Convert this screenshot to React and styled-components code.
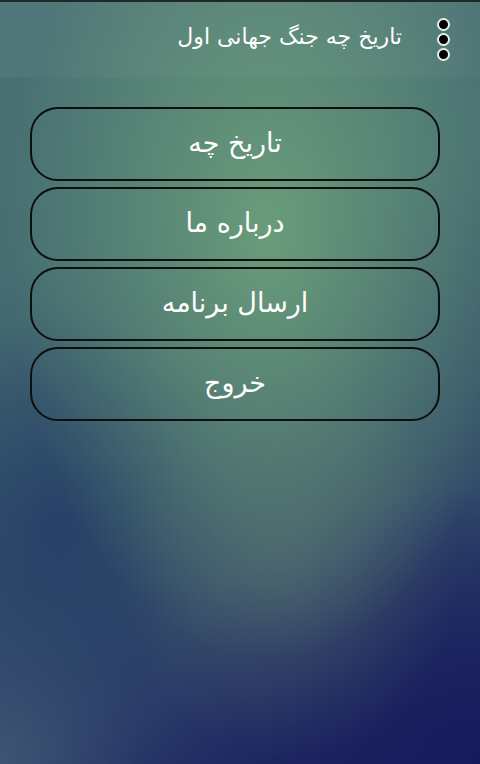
import React from 'react'
import styled, { createGlobalStyle } from 'styled-components'

const GlobalStyle = createGlobalStyle`
  html, body {
    margin: 0;
    padding: 0;
    background: #1c2a3a;
  }
  * {
    box-sizing: border-box;
  }
`

const Screen = styled.div`
  width: 480px;
  height: 764px;
  overflow: hidden;
  display: flex;
  flex-direction: column;
  font-family: "DejaVu Sans", "Noto Sans", sans-serif;
  background:
    radial-gradient(ellipse 260px 430px at 268px 230px, rgba(106, 156, 122, 1) 0%, rgba(106, 156, 122, 0.6) 40%, rgba(106, 156, 122, 0) 100%),
    radial-gradient(ellipse 170px 200px at 290px 560px, rgba(80, 100, 108, 0.6) 0%, rgba(80, 100, 108, 0) 100%),
    radial-gradient(ellipse 180px 220px at 60px 530px, rgba(36, 62, 104, 0.85) 0%, rgba(36, 62, 104, 0) 100%),
    radial-gradient(ellipse 150px 200px at 0px 764px, rgba(66, 92, 118, 0.8) 0%, rgba(66, 92, 118, 0) 100%),
    radial-gradient(ellipse 330px 280px at 480px 764px, rgba(22, 27, 92, 1) 0%, rgba(22, 27, 92, 0.6) 50%, rgba(22, 27, 92, 0) 100%),
    linear-gradient(165deg, #4a7275 0%, #466e72 30%, #36536a 62%, #2a3a68 85%, #1d2562 100%);
`

const StatusStrip = styled.div`
  height: 2px;
  background: #222826;
`

const Toolbar = styled.header`
  height: 75px;
  display: flex;
  align-items: center;
  justify-content: flex-end;
  padding-right: 30px;
  gap: 35px;
  background: rgba(255, 255, 255, 0.035);
`

const Title = styled.h1`
  margin: 0;
  direction: rtl;
  color: #fff;
  font-size: 22px;
  font-weight: normal;
  line-height: 1;
  padding-bottom: 6px;
`

const MenuDots = styled.div`
  display: flex;
  flex-direction: column;
  gap: 2px;
`

const Dot = styled.span`
  width: 13px;
  height: 13px;
  border-radius: 50%;
  background: #000;
  border: 2px solid #e8efe8;
`

const Menu = styled.nav`
  display: flex;
  flex-direction: column;
  gap: 6px;
  padding: 30px 40px 0 30px;
`

const MenuButton = styled.button`
  height: 74px;
  width: 410px;
  border: 2px solid #0d0f0e;
  border-radius: 28px;
  background: transparent;
  color: #fff;
  font-family: inherit;
  font-size: 27px;
  direction: rtl;
  display: flex;
  align-items: center;
  justify-content: center;
  padding-bottom: 4px;
  cursor: pointer;
`

const items = ['تاریخ چه', 'درباره ما', 'ارسال برنامه', 'خروج']

export default function App() {
  return (
    <>
      <GlobalStyle />
      <Screen>
        <StatusStrip />
        <Toolbar>
          <Title>تاریخ چه جنگ جهانی اول</Title>
          <MenuDots>
            <Dot />
            <Dot />
            <Dot />
          </MenuDots>
        </Toolbar>
        <Menu>
          {items.map(label => (
            <MenuButton key={label}>{label}</MenuButton>
          ))}
        </Menu>
      </Screen>
    </>
  )
}
